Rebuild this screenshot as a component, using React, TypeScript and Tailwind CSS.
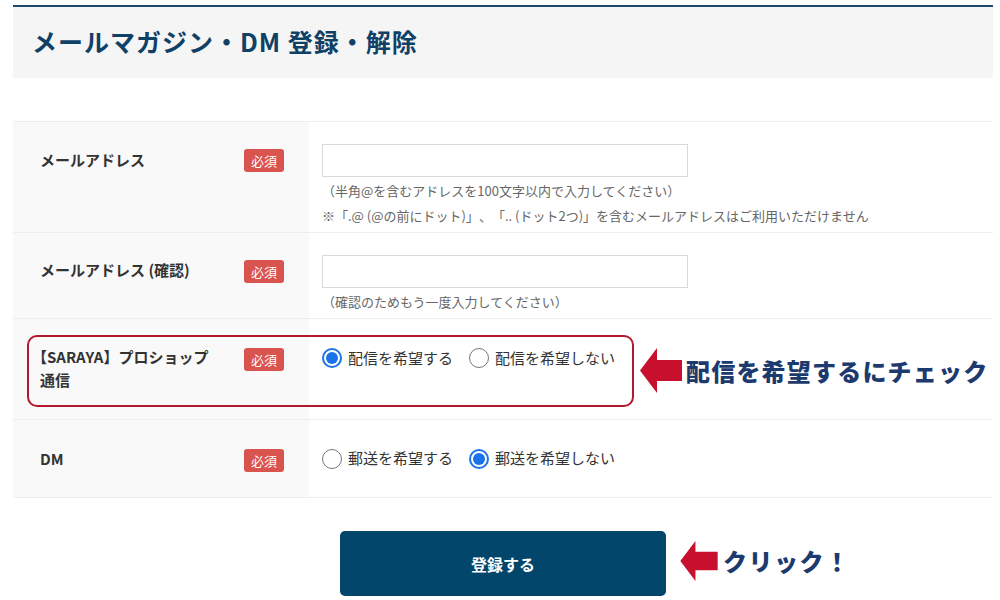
import React from "react";

const font = { fontFamily: '"Noto Sans CJK JP", "Noto Sans", sans-serif' };

function Badge() {
  return (
    <span className="inline-flex h-[23px] w-[40px] items-center justify-center rounded-[3px] bg-[#d9534f] text-[13px] leading-none text-white">
      必須
    </span>
  );
}

function Radio({ checked, label }: { checked: boolean; label: string }) {
  return (
    <label className="flex items-center gap-[6px] text-[15px] text-[#333]">
      {checked ? (
        <span className="flex h-[20px] w-[20px] items-center justify-center rounded-full border-2 border-[#1a73e8] bg-white">
          <span className="h-[12px] w-[12px] rounded-full bg-[#1a73e8]" />
        </span>
      ) : (
        <span className="h-[20px] w-[20px] rounded-full border border-[#767676] bg-white" />
      )}
      <span>{label}</span>
    </label>
  );
}

function Arrow({ className }: { className?: string }) {
  return (
    <svg className={className} viewBox="0 0 42 45" width="42" height="45">
      <polygon points="0,22.5 17,0 17,12 42,12 42,33 17,33 17,45" fill="#c8102e" />
    </svg>
  );
}

function LabelCell({ children, badgeTop }: { children: React.ReactNode; badgeTop: string }) {
  return (
    <div className="relative flex w-[296px] shrink-0 bg-[#f9f9f9] pl-[27px] pr-[25px]">
      <div className="flex-1 text-[15px] font-bold leading-[23px] text-[#333]">{children}</div>
      <div className={badgeTop}>
        <Badge />
      </div>
    </div>
  );
}

export default function App() {
  return (
    <div className="min-h-[600px] w-full bg-white pt-[5px] [text-spacing-trim:space-all]" style={font}>
      <div className="ml-[13px] w-[980px]">
        <div className="flex h-[73px] items-center border-t-2 border-[#1d4a6b] bg-[#f5f5f5] pb-[2px] pl-[19px]">
          <h1 className="text-[25px] font-bold tracking-[1px] text-[#0f4066]">メールマガジン・DM 登録・解除</h1>
        </div>

        <div className="mt-[43px] border-t border-[#eeeeee]">
          {/* Row 1 */}
          <div className="flex h-[111px] border-b border-[#eeeeee]">
            <LabelCell badgeTop="pt-[25px]">
              <div className="mt-[26px]">メールアドレス</div>
            </LabelCell>
            <div className="flex-1 bg-white pl-[13px] pt-[22px]">
              <div className="h-[33px] w-[366px] border border-[#d9d9d9] bg-white" />
              <div className="mt-[1px] text-[13px] leading-[26px] text-[#666]">（半角@を含むアドレスを100文字以内で入力してください）</div>
              <div className="text-[13px] leading-[24px] text-[#666]">※「.@ (@の前にドット)」、「.. (ドット2つ)」を含むメールアドレスはご利用いただけません</div>
            </div>
          </div>

          {/* Row 2 */}
          <div className="flex h-[86px] border-b border-[#eeeeee]">
            <LabelCell badgeTop="pt-[25px]">
              <div className="mt-[25px]">メールアドレス (確認)</div>
            </LabelCell>
            <div className="flex-1 bg-white pl-[13px] pt-[22px]">
              <div className="h-[33px] w-[366px] border border-[#d9d9d9] bg-white" />
              <div className="mt-[1px] text-[13px] leading-[26px] text-[#666]">（確認のためもう一度入力してください）</div>
            </div>
          </div>

          {/* Row 3 */}
          <div className="relative flex h-[101px] border-b border-[#eeeeee]">
            <LabelCell badgeTop="pt-[27px]">
              <div className="-ml-[8px] mt-[26px] leading-[23px]">
                【SARAYA】プロショップ
                <br />
                <span className="ml-[8px]">通信</span>
              </div>
            </LabelCell>
            <div className="flex flex-1 items-start gap-[16px] bg-white pl-[13px] pt-[28px]">
              <Radio checked label="配信を希望する" />
              <Radio checked={false} label="配信を希望しない" />
            </div>
            <div className="pointer-events-none absolute left-[14px] top-[16px] h-[72px] w-[607px] rounded-[10px] border-2 border-[#b3192e]" />
            <div className="absolute left-[627px] top-[29px] flex items-center gap-[4px]">
              <Arrow />
              <span className="text-[24px] font-black leading-none tracking-[1.2px] text-[#1d3a6e]">配信を希望するにチェック</span>
            </div>
          </div>

          {/* Row 4 */}
          <div className="flex h-[78px] border-b border-[#eeeeee]">
            <LabelCell badgeTop="pt-[27px]">
              <div className="mt-[27px]">DM</div>
            </LabelCell>
            <div className="flex flex-1 items-center gap-[16px] bg-white pl-[13px]">
              <Radio checked={false} label="郵送を希望する" />
              <Radio checked label="郵送を希望しない" />
            </div>
          </div>
        </div>

        <div className="relative mt-[33px] flex justify-center">
          <button className="h-[65px] w-[326px] rounded-[5px] bg-[#03466b] text-[16px] font-bold text-white">
            登録する
          </button>
          <div className="absolute left-[666px] top-[10px] flex items-center gap-[4px]">
            <Arrow className="h-[40px] w-[40px]" />
            <span className="text-[24px] font-black leading-none tracking-[1.5px] text-[#1d3a6e]">クリック！</span>
          </div>
        </div>
      </div>
    </div>
  );
}
